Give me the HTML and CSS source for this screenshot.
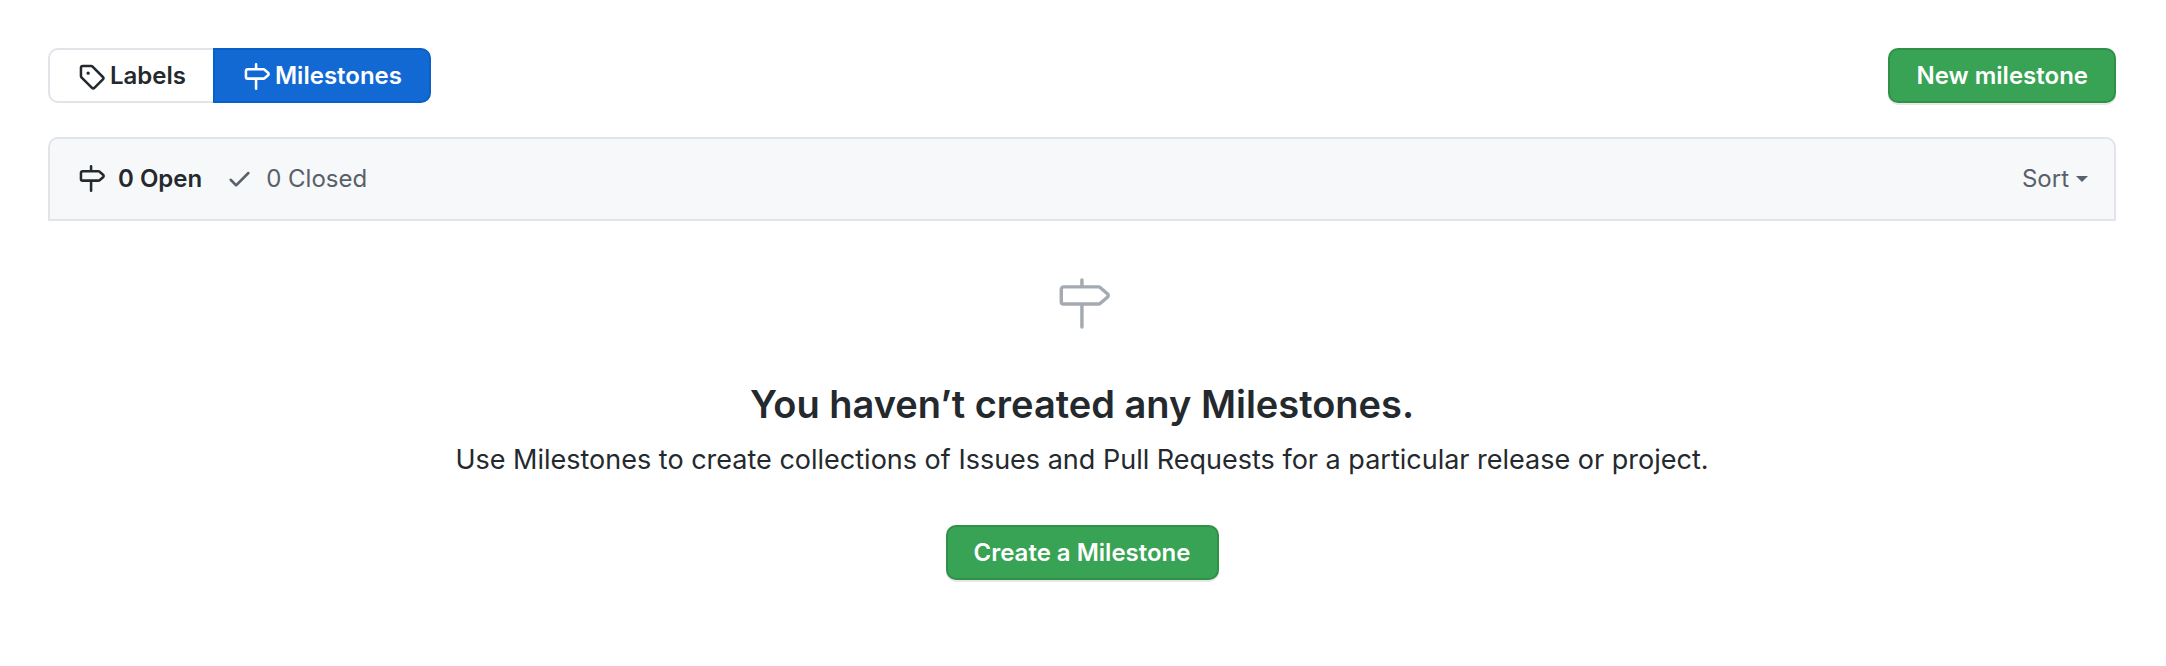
FILE: index.html
```html
<!DOCTYPE html>
<html lang="en">
<head>
<meta charset="utf-8">
<title>Milestones</title>
<link rel="stylesheet" href="styles.css">
</head>
<body>
<svg class="sprite" aria-hidden="true">
  <symbol id="milestone" viewBox="0 0 16 16"><path fill-rule="evenodd" d="M7.75 0a.75.75 0 01.75.75V3h3.634c.414 0 .814.147 1.13.414l2.07 1.75a1.75 1.75 0 010 2.672l-2.07 1.75a1.75 1.75 0 01-1.13.414H8.5v5.25a.75.75 0 11-1.5 0V10H2.75A1.75 1.75 0 011 8.25v-3.5C1 3.784 1.784 3 2.75 3H7V.75A.75.75 0 017.75 0zm0 8.5h4.384a.25.25 0 00.161-.06l2.07-1.75a.25.25 0 000-.38l-2.07-1.75a.25.25 0 00-.161-.06H2.75a.25.25 0 00-.25.25v3.5c0 .138.112.25.25.25h5z"/></symbol>
</svg>
<main class="page">
  <header class="toolbar">
    <nav class="subnav" aria-label="Issue sections">
      <a class="subnav-item" href="#labels"><svg class="icon" viewBox="0 0 16 16" aria-hidden="true"><path fill-rule="evenodd" d="M2.5 7.775V2.75a.25.25 0 01.25-.25h5.025a.25.25 0 01.177.073l6.25 6.25a.25.25 0 010 .354l-5.025 5.025a.25.25 0 01-.354 0l-6.25-6.25a.25.25 0 01-.073-.177zm-1.5 0V2.75C1 1.784 1.784 1 2.75 1h5.025c.464 0 .91.184 1.238.513l6.25 6.25a1.75 1.75 0 010 2.474l-5.026 5.026a1.75 1.75 0 01-2.474 0l-6.25-6.25A1.75 1.75 0 011 7.775zM6 5a1 1 0 100 2 1 1 0 000-2z"/></svg>Labels</a>
      <a class="subnav-item selected" href="#milestones" aria-current="page"><svg class="icon" aria-hidden="true"><use href="#milestone"/></svg>Milestones</a>
    </nav>
    <button class="btn" type="button">New milestone</button>
  </header>
  <section class="box-header">
    <div class="states">
      <a class="state current" href="#open"><svg class="icon" aria-hidden="true"><use href="#milestone"/></svg>0 Open</a>
      <a class="state" href="#closed"><svg class="icon" viewBox="0 0 16 16" aria-hidden="true"><path fill-rule="evenodd" d="M13.78 4.22a.75.75 0 010 1.06l-7.25 7.25a.75.75 0 01-1.06 0L2.22 9.28a.75.75 0 011.06-1.06L6 10.94l6.72-6.72a.75.75 0 011.06 0z"/></svg>0 Closed</a>
    </div>
    <button class="sort" type="button">Sort<span class="caret"></span></button>
  </section>
  <section class="blankslate">
    <svg class="blank-icon" viewBox="0 0 24 24" aria-hidden="true"><path fill-rule="evenodd" d="M11.75 1a.75.75 0 01.75.75V4h6.532c.42 0 .826.15 1.143.425l3.187 2.75a1.75 1.75 0 010 2.65l-3.187 2.75a1.75 1.75 0 01-1.143.425H12.5v9.25a.75.75 0 01-1.5 0V13H3.75A1.75 1.75 0 012 11.25v-5.5C2 4.783 2.784 4 3.75 4H11V1.75a.75.75 0 01.75-.75zm0 10.5h7.282a.25.25 0 00.163-.06l3.188-2.75a.25.25 0 000-.38l-3.188-2.75a.25.25 0 00-.163-.06H3.75a.25.25 0 00-.25.25v5.5c0 .138.112.25.25.25h8z"/></svg>
    <h1 class="title">You haven’t created any Milestones.</h1>
    <p class="text">Use Milestones to create collections of Issues and Pull Requests for a particular release or project.</p>
    <button class="btn" type="button">Create a Milestone</button>
  </section>
</main>
</body>
</html>
```
FILE: styles.css
```css
* {
  box-sizing: border-box;
}

body {
  margin: 0;
  background: #fff;
  color: #24292e;
  font-family: Inter, "Liberation Sans", sans-serif;
  font-size: 24px;
  line-height: 35px;
}

a {
  color: inherit;
  text-decoration: none;
}

.sprite {
  display: none;
}

.page {
  padding: 48px 50px 48px 48px;
}

.toolbar,
.box-header {
  display: flex;
  align-items: center;
  justify-content: space-between;
}

.subnav {
  display: flex;
}

.icon {
  width: 27px;
  height: 27px;
  fill: currentColor;
  vertical-align: text-bottom;
}

.subnav-item {
  padding: 8px 27px 8px 28px;
  border: 2px solid #e1e4e8;
  border-right: 0;
  border-radius: 10px 0 0 10px;
  font-weight: 600;
}

.subnav-item .icon {
  margin-right: 5px;
}

.subnav-item.selected {
  border: 2px solid #0a60c6;
  border-radius: 0 10px 10px 0;
  background: #1269d3;
  color: #fff;
}

.btn {
  padding: 8px 26px;
  border: 2px solid #2f9048;
  border-radius: 10px;
  background: #38a354;
  box-shadow: 0 2px 0 rgba(27, 31, 35, 0.1);
  color: #fff;
  font: inherit;
  font-weight: 600;
}

.box-header {
  margin-top: 34px;
  padding: 22px 26px 23px 28px;
  border: 2px solid #e1e4e8;
  border-radius: 10px 10px 0 0;
  background: #f6f8fa;
  color: #586069;
}

.states {
  display: flex;
  gap: 24px;
}

.state {
  display: flex;
  align-items: center;
  gap: 13px;
}

.state.current {
  color: #24292e;
  font-weight: 600;
}

.sort {
  display: flex;
  align-items: center;
  gap: 7px;
  padding: 0;
  border: 0;
  background: none;
  color: inherit;
  font: inherit;
}

.caret {
  border: 6px solid transparent;
  border-top-color: currentColor;
  border-bottom: 0;
}

.blankslate {
  display: flex;
  flex-direction: column;
  align-items: center;
  padding-top: 55px;
  text-align: center;
}

.blank-icon {
  width: 55px;
  height: 55px;
  fill: #a3aab1;
}

.title {
  margin: 42px 0 4px;
  font-size: 38px;
  font-weight: 600;
  line-height: 62px;
}

.text {
  margin: 0 0 45px;
  font-size: 27px;
  line-height: 41px;
}
```
